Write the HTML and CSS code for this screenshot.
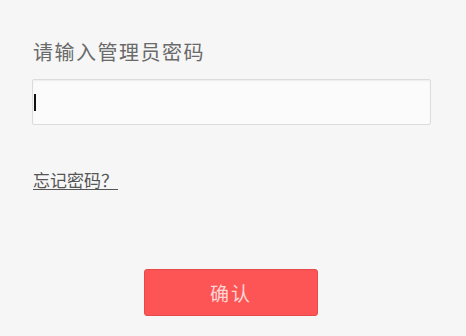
FILE: index.html
```html
<!DOCTYPE html>
<html lang="zh">
<head>
<meta charset="utf-8">
<link rel="stylesheet" href="styles.css">
</head>
<body>
<div class="page">
  <div class="title">请输入管理员密码</div>
  <div class="input"><span class="caret"></span></div>
  <a class="forgot" href="#">忘记密码？</a>
  <div class="actions">
    <button class="confirm" type="button">确认</button>
  </div>
</div>
</body>
</html>
```
FILE: styles.css
```css
html, body {
  margin: 0;
  padding: 0;
  background: #f6f6f6;
}
.page {
  width: 466px;
  height: 336px;
  box-sizing: border-box;
  padding: 38px 35px 0 32px;
  font-family: "Noto Sans CJK SC", "Noto Sans", sans-serif;
  display: flex;
  flex-direction: column;
  align-items: flex-start;
}
.title {
  font-size: 20px;
  line-height: 28px;
  color: #6a6a6a;
  letter-spacing: 1.5px;
  padding-left: 1px;
}
.input {
  margin-top: 13px;
  width: 399px;
  height: 46px;
  box-sizing: border-box;
  border: 1px solid #dcdcdc;
  border-radius: 2px;
  background: #fbfbfb;
  box-shadow: inset 0 1px 2px rgba(0,0,0,0.06);
  display: flex;
  align-items: center;
  padding-left: 1px;
}
.caret {
  width: 2px;
  height: 17px;
  background: #111;
}
.forgot {
  margin-top: 43px;
  font-size: 17px;
  line-height: 24px;
  color: #555;
  text-decoration: underline;
  text-underline-offset: 2px;
  margin-left: 1px;
}
.actions {
  align-self: stretch;
  display: flex;
  justify-content: flex-start;
  margin-top: 77px;
  padding-left: 112px;
}
.confirm {
  width: 174px;
  height: 47px;
  background: #fd5555;
  border: 1px solid #e64a4a;
  border-radius: 3px;
  color: #ffd6d6;
  font-family: "Noto Sans CJK SC", "Noto Sans", sans-serif;
  font-size: 19px;
  letter-spacing: 2px;
  padding: 0;
}
```
